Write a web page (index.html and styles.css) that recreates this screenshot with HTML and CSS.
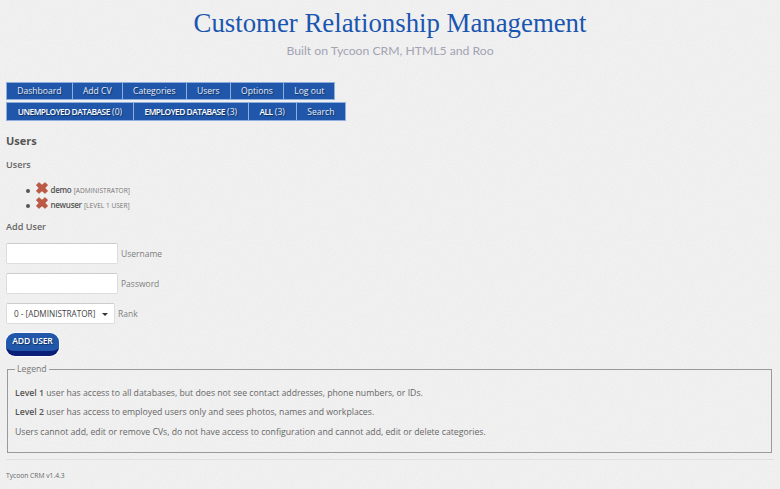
FILE: index.html
```html
<!DOCTYPE html>
<html lang="en">
<head>
    <meta charset="UTF-8">
    <title>Customer Relationship Management</title>
    <link rel="stylesheet" href="styles.css">
</head>
<body>
    <header class="site-head">
        <h1>Customer Relationship Management</h1>
        <p>Built on Tycoon CRM, HTML5 and Roo</p>
    </header>
    <nav class="menu">
        <a href="#">Dashboard</a><a href="#">Add CV</a><a href="#">Categories</a><a href="#">Users</a><a href="#">Options</a><a href="#">Log out</a>
    </nav>
    <nav class="menu menu-db">
        <a href="#"><b>UNEMPLOYED DATABASE</b> (0)</a><a href="#"><b>EMPLOYED DATABASE</b> (3)</a><a href="#"><b>ALL</b> (3)</a><a href="#">Search</a>
    </nav>
    <h2>Users</h2>
    <h3 class="users-title">Users</h3>
    <ul class="user-list">
        <li>
            <svg class="del" viewBox="0 0 12 12"><path d="M3 .4 6 3.1 9 .4l2.8 2.7L9.1 6l2.7 2.9L9 11.6 6 8.9l-3 2.7L.2 8.9 2.9 6 .2 3.1z"/></svg>
            <b>demo</b> <small>[ADMINISTRATOR]</small>
        </li>
        <li>
            <svg class="del" viewBox="0 0 12 12"><path d="M3 .4 6 3.1 9 .4l2.8 2.7L9.1 6l2.7 2.9L9 11.6 6 8.9l-3 2.7L.2 8.9 2.9 6 .2 3.1z"/></svg>
            <b>newuser</b> <small>[LEVEL 1 USER]</small>
        </li>
    </ul>
    <h3 class="add-title">Add User</h3>
    <form class="add-user">
        <div class="field"><input type="text"><label>Username</label></div>
        <div class="field"><input type="password"><label>Password</label></div>
        <div class="field">
            <div class="select">0 - [ADMINISTRATOR]<span class="caret"></span></div>
            <label>Rank</label>
        </div>
        <button type="button">ADD USER</button>
    </form>
    <fieldset class="legend">
        <legend>Legend</legend>
        <p><b>Level 1</b> user has access to all databases, but does not see contact addresses, phone numbers, or IDs.</p>
        <p><b>Level 2</b> user has access to employed users only and sees photos, names and workplaces.</p>
        <p>Users cannot add, edit or remove CVs, do not have access to configuration and cannot add, edit or delete categories.</p>
    </fieldset>
    <footer>Tycoon CRM v1.4.3</footer>
</body>
</html>
```

FILE: styles.css
```css
body {
    margin: 0;
    padding: 0 6px;
    height: 489px;
    box-sizing: border-box;
    overflow: hidden;
    background-color: #eeeeee;
    background-image: url("data:image/svg+xml,%3Csvg xmlns='http://www.w3.org/2000/svg' width='200' height='200'%3E%3Cfilter id='n'%3E%3CfeTurbulence type='fractalNoise' baseFrequency='.55' numOctaves='2' stitchTiles='stitch'/%3E%3CfeColorMatrix values='0 0 0 0 1 0 0 0 0 1 0 0 0 0 1 0 0 0 .9 -.3'/%3E%3C/filter%3E%3Crect width='200' height='200' filter='url(%23n)' opacity='.5'/%3E%3C/svg%3E");
    font-family: "Open Sans", sans-serif;
    font-size: 8.7px;
    color: #666;
}

.site-head {
    text-align: center;
    height: 82px;
}

.site-head h1 {
    margin: 0;
    padding-top: 7px;
    font-family: "Liberation Serif", serif;
    font-size: 26.8px;
    line-height: 32px;
    font-weight: normal;
    color: #1a56b0;
}

.site-head p {
    margin: 3px 0 0;
    font-family: Lato, sans-serif;
    font-size: 12.2px;
    line-height: 18px;
    color: #a3a3b3;
}

.menu {
    display: flex;
    height: 18px;
    margin-bottom: 2px;
}

.menu a {
    display: block;
    padding: 0 10.2px;
    line-height: 17px;
    font-size: 8.6px;
    background-color: #2057aa;
    border: 1px solid #8eaedd;
    border-left-width: 0;
    color: #e6edf7;
    text-decoration: none;
    text-shadow: 1px 1px 1px rgba(0, 0, 0, .45);
}

.menu a:first-child {
    border-left-width: 1px;
}

.menu-db {
    height: 19px;
}

.menu-db a {
    padding: 0 10.7px;
    line-height: 18px;
}

.menu-db b {
    font-size: 8.4px;
    font-weight: 600;
    letter-spacing: -.5px;
    color: #fff;
}

h2 {
    margin: 12px 0 0;
    font-size: 11px;
    line-height: 16px;
    color: #555;
}

h3 {
    margin: 0;
    font-size: 9.1px;
    line-height: 14px;
    font-weight: 600;
    color: #666;
}

.users-title {
    margin-top: 9px;
}

.user-list {
    margin: 10px 0 0;
    padding-left: 20px;
    list-style: none;
}

.user-list li {
    height: 15px;
    line-height: 15px;
}

.user-list li::before {
    content: "";
    display: inline-block;
    width: 4px;
    height: 4px;
    margin-right: 4px;
    border-radius: 50%;
    background-color: #555;
    vertical-align: 0;
}

.user-list b {
    font-size: 8px;
    font-weight: 600;
    letter-spacing: -.3px;
    color: #555;
}

.user-list small {
    font-size: 6.6px;
    color: #777;
}

.del {
    width: 12px;
    height: 12px;
    vertical-align: -1px;
    fill: #bd5a45;
    stroke: #a34a38;
    stroke-width: .4;
}

.add-title {
    margin-top: 8px;
}

.add-user {
    margin-top: 9px;
}

.field {
    display: flex;
    align-items: center;
    gap: 3px;
    margin-top: 9px;
    height: 21px;
}

.field label {
    font-size: 8.5px;
    color: #808080;
}

.field input {
    box-sizing: border-box;
    width: 112px;
    height: 21px;
    margin: 0;
    padding: 0;
    background-color: #fff;
    border: 1px solid #ddd;
    border-top-color: #ccc;
    border-radius: 2px;
}

.select {
    position: relative;
    box-sizing: border-box;
    width: 109px;
    height: 21px;
    padding-left: 7px;
    font-size: 8.2px;
    line-height: 20px;
    background-color: #fff;
    border: 1px solid #ddd;
    border-top-color: #ccc;
    border-radius: 2px;
    color: #444;
}

.caret {
    position: absolute;
    right: 6px;
    top: 9px;
    border-left: 3px solid transparent;
    border-right: 3px solid transparent;
    border-top: 3px solid #333;
}

.add-user button {
    display: block;
    width: 53px;
    height: 23px;
    margin-top: 9px;
    padding: 0 0 2px;
    background-color: #2057aa;
    border: none;
    border-bottom: 5px solid #0a1f78;
    border-radius: 9px;
    box-shadow: 0 0 0 1px #fafafa;
    font-family: "Open Sans", sans-serif;
    font-size: 8.6px;
    font-weight: 600;
    letter-spacing: -.2px;
    color: #fff;
    text-shadow: 1px 1px 1px rgba(0, 0, 0, .45);
}

.legend {
    margin: 7px 2px 0 1px;
    padding: 11.5px 7px 0;
    height: 90px;
    box-sizing: border-box;
    border: 1px solid #999;
}

.legend legend {
    padding: 0 2px;
    color: #777;
}

.legend p {
    margin: 0 0 6.5px;
    line-height: 13px;
    color: #666;
}

.legend b {
    font-weight: 600;
    color: #555;
}

footer {
    margin-top: 6px;
    padding-top: 11px;
    border-top: 1px solid #e0e0e0;
    font-size: 6.7px;
    color: #666;
}
```
